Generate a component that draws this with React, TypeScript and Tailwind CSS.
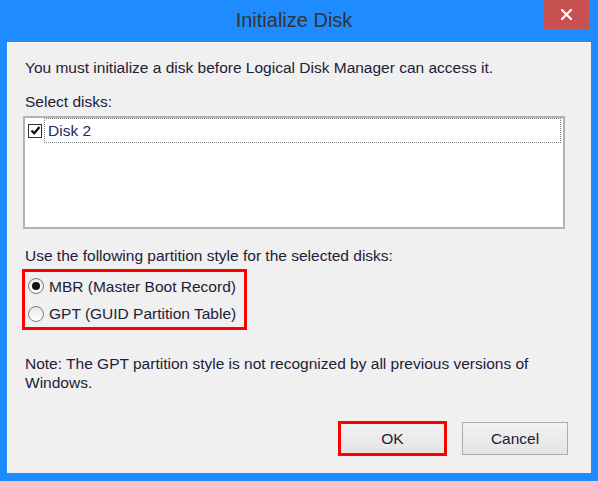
import React from 'react';

export default function App() {
  return (
    <div className="w-[598px] h-[481px] bg-[#1e8bff] flex flex-col font-['Liberation_Sans',Arial,sans-serif]">
      {/* barra de titulo */}
      <div className="relative h-[42px] flex items-center justify-center pr-[10px]">
        <span className="text-[20px] leading-none text-[#333333] -mt-[2px]">Initialize Disk</span>
        <div className="absolute right-[9px] top-0 w-[45px] h-[29px] bg-[#c75050] flex items-center justify-center">
          <svg width="11" height="11" viewBox="0 0 11 11">
            <path d="M1 1 L10 10 M10 1 L1 10" stroke="#fff" strokeWidth="2.2" strokeLinecap="square" />
          </svg>
        </div>
      </div>

      {/* area del cliente */}
      <div className="mx-[7px] mb-[8px] flex-1 bg-[#f0f0f0] border-t border-l border-[#f8f8f8] pl-[15px] pt-[15px] text-[15.5px] leading-[19px] text-[#1d2138]">
        <p className="pl-[2px]">You must initialize a disk before Logical Disk Manager can access it.</p>
        <p className="pl-[2px] mt-[15px]">Select disks:</p>

        {/* lista de discos */}
        <div className="mt-[5px] w-[542px] h-[113px] bg-white border-2 border-[#b3b3b3]">
          <div className="flex items-center h-[25px]">
            <div className="ml-[3px] w-[14px] h-[14px] border border-[#333] bg-white flex items-center justify-center">
              <svg width="11" height="11" viewBox="0 0 11 11">
                <path d="M1.5 5.5 L4.2 8.3 L9.5 2" stroke="#111" strokeWidth="2.2" fill="none" />
              </svg>
            </div>
            <div className="ml-[2px] flex-1 mr-[2px] h-[25px] border border-dotted border-[#777] flex items-center pl-[3px] text-[#1c2a66]">
              Disk 2
            </div>
          </div>
        </div>

        <p className="pl-[2px] mt-[17px]">Use the following partition style for the selected disks:</p>

        {/* opciones de particion */}
        <div className="mt-[4px] -ml-[1px] w-[225px] h-[61px] border-[3px] border-[#ff0000] flex flex-col pl-[3px]">
          <div className="flex items-center h-[28px]">
            <div className="w-[16px] h-[16px] rounded-full border border-[#7a7a7a] bg-gradient-to-b from-[#e8e8e8] to-white flex items-center justify-center">
              <div className="w-[8px] h-[8px] rounded-full bg-[#111]" />
            </div>
            <span className="ml-[5px]">MBR (Master Boot Record)</span>
          </div>
          <div className="flex items-center h-[27px]">
            <div className="w-[16px] h-[16px] rounded-full border border-[#7a7a7a] bg-gradient-to-b from-[#e8e8e8] to-white" />
            <span className="ml-[5px]">GPT (GUID Partition Table)</span>
          </div>
        </div>

        <p className="pl-[2px] mt-[24px]">
          Note: The GPT partition style is not recognized by all previous versions of
          <br />
          Windows.
        </p>

        {/* botones */}
        <div className="mt-[29px] flex items-center justify-end pr-[23px]">
          <div className="w-[109px] h-[35px] border-[3px] border-[#ff0000] bg-gradient-to-b from-[#f2f2f2] to-[#e4e4e4] flex items-center justify-center text-[#1d2138]">
            OK
          </div>
          <div className="ml-[15px] w-[106px] h-[33px] border border-[#acacac] bg-gradient-to-b from-[#f2f2f2] to-[#e4e4e4] flex items-center justify-center text-[#1d2138]">
            Cancel
          </div>
        </div>
      </div>
    </div>
  );
}
